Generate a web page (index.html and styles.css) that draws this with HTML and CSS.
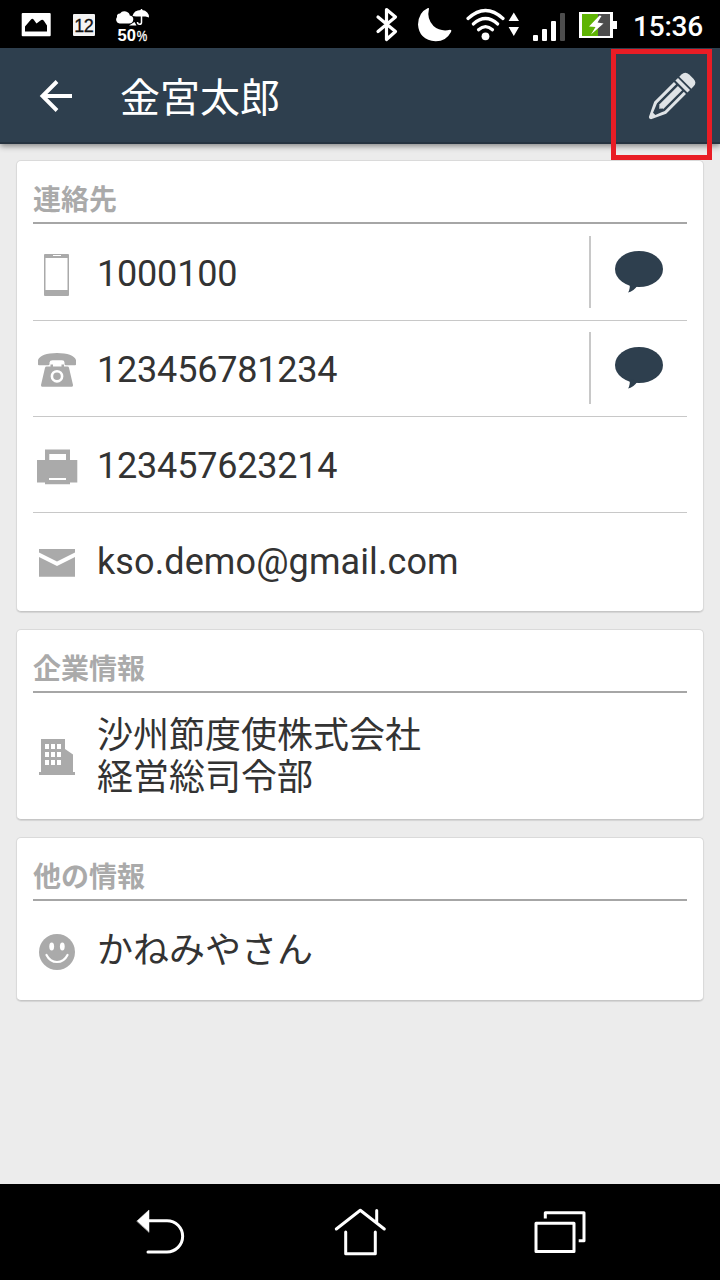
FILE: index.html
```html
<!DOCTYPE html>
<html lang="ja">
<head>
    <meta charset="UTF-8">
    <meta name="viewport" content="width=device-width, initial-scale=1.0">
    <title>金宮太郎</title>
    <link rel="stylesheet" href="styles.css">
</head>
<body>
    <div class="statusbar">
        <div class="status-left">
            <svg width="48" height="48" viewBox="0 0 48 48">
                <rect x="9.7" y="13" width="29" height="23.3" rx="1" fill="#fff"/>
                <path d="M13 31.5V26.5L19 19.5Q20.3 18 21.6 19.5L24.5 23.5L28.5 20.5Q30.5 19 32 21L35 25.5V31.5Z" fill="#000"/>
            </svg>
            <svg width="48" height="48" viewBox="0 0 48 48">
                <rect x="13" y="14" width="22" height="22" rx="1" fill="#f4f4f4"/>
                <text class="calendar-day" x="23.800" y="32" text-anchor="middle">12</text>
            </svg>
            <svg width="48" height="48" viewBox="0 0 48 48">
                <path d="M11.500 23.500A4 4 0 0 1 9 17Q8.500 14 12 13.600Q14 10.500 18 11.500Q21.500 12.500 21.800 15.500Q25.500 16 25.300 19.500Q25 23.500 21 23.500Z" fill="#fff"/>
                <path d="M24.500 16Q26 9.500 34 10Q41 11 41 17.500L37.500 16.600L33 16.600L28 16.600Z" fill="#fff"/>
                <path d="M33.500 9V22.500Q33.500 24.300 31.500 24.300Q29.500 24.300 29.500 22" fill="none" stroke="#fff" stroke-width="1.500"/>
                <path d="M21 25.500L26.500 22L28.500 25.500Z" fill="#fff"/>
                <text class="rain-value" x="9.500" y="41" textLength="18.500" lengthAdjust="spacingAndGlyphs">50</text>
                <text class="rain-unit" x="28.800" y="41" textLength="10.500" lengthAdjust="spacingAndGlyphs">%</text>
            </svg>
        </div>
        <div class="status-right">
            <svg width="34" height="48" viewBox="0 0 34 48">
                <path d="M8 17L25.500 31.500L16.500 39.500V9.500L25.500 17L8 31.500" fill="none" stroke="#fff" stroke-width="3.200" stroke-linejoin="round" stroke-linecap="round"/>
            </svg>
            <svg width="34" height="48" viewBox="0 0 34 48">
                <path d="M11 8.500Q8.500 19 15.500 26Q22.500 32 32 29.800Q34 29.800 33 32Q28 41.500 17.500 41.300Q1 40 0 24.500Q0.500 12.500 9.500 8.300Q11 7.500 11 8.500Z" fill="#fff"/>
            </svg>
            <svg width="53" height="48" viewBox="0 0 53 48">
                <g fill="none" stroke="#fff" stroke-width="3.200" stroke-linecap="round">
                    <path d="M2 18.500Q19.500 2.500 37 18.500"/>
                    <path d="M7.300 24Q19.500 13 31.700 24"/>
                    <path d="M12.500 29.800Q19.500 23.500 26.500 29.800"/>
                </g>
                <circle cx="19.500" cy="36.300" r="3.900" fill="#fff"/>
                <path d="M47.800 12.500L53 21H42.600ZM42.600 27H53L47.800 36Z" fill="#fff"/>
            </svg>
            <svg width="32" height="48" viewBox="0 0 32 48">
                <rect x="0" y="35" width="5" height="6" rx="1" fill="#fff"/>
                <rect x="9" y="29" width="5" height="12" rx="1" fill="#fff"/>
                <rect x="18" y="21" width="5" height="20" rx="1" fill="#fff"/>
                <rect x="27" y="13" width="5" height="28" rx="1" fill="#4d4d4d"/>
            </svg>
            <svg width="41" height="48" viewBox="0 0 41 48">
                <rect x="0" y="12" width="34" height="26" fill="#fff"/>
                <rect x="33" y="21" width="5" height="8" fill="#fff"/>
                <rect x="3" y="14" width="16" height="22" fill="#5fb404"/>
                <rect x="19" y="14" width="12" height="22" fill="#4d4d4d"/>
                <path d="M20.500 15.500L10 26.500L16.500 27L12 34.500L24.500 23.500L18.500 22.500L22.500 16Z" fill="#fff"/>
            </svg>
            <span class="clock">15:36</span>
        </div>
    </div>

    <header class="appbar">
        <svg class="back" width="48" height="48" viewBox="0 0 48 48">
            <path d="M40 24H10M25 9.500L10.500 24L25 38.500" fill="none" stroke="#fff" stroke-width="3.900"/>
        </svg>
        <h1 class="title">金宮太郎</h1>
        <svg class="edit" width="48" height="48" viewBox="0 0 48 48">
            <g transform="translate(43.300 4.700) rotate(45)" fill="#dfe3e6">
                <path d="M-8.500 8.500V5.500Q-8.500 0 -3 0H3Q8.500 0 8.500 5.500V8.500Z"/>
                <rect x="-8.500" y="10.300" width="17" height="3.700"/>
                <rect x="-3" y="16" width="6" height="28"/>
                <path d="M-8.500 16H-5.400V43L-4.500 45L-2 42L0 44.500L2 42L4.500 45L5.400 43V16H8.500V44L1.500 58.500Q0 60 -1.500 58.500L-8.500 44Z"/>
                <path d="M-4.800 44.500L-2.600 42.500L0 45.500L2.600 42.500L4.800 44.500L1.600 52.500H-1.600Z" fill="#2e3f4e"/>
            </g>
        </svg>
        <div class="highlight"></div>
    </header>

    <main class="content">
        <section class="card">
            <h2 class="card-head">連絡先</h2>
            <div class="card-list">
                <div class="row">
                    <svg class="icon" viewBox="0 -1 48 49">
                        <path fill-rule="evenodd" d="M12 5H35Q36 5 36 6V46Q36 47 35 47H12Q11 47 11 46V6Q11 5 12 5ZM12.500 9V41H34.500V9ZM20 6V7H28V6Z"/>
                    </svg>
                    <span class="text number">1000100</span>
                    <div class="message">
                        <svg width="50" height="44" viewBox="0 0 50 44">
                            <ellipse cx="25" cy="19" rx="24" ry="18"/>
                            <path d="M15.500 33Q16.500 39 14 42.500Q19 42 24 35Z"/>
                        </svg>
                    </div>
                </div>
                <div class="row">
                    <svg class="icon" viewBox="0 -1 48 49">
                        <path d="M5 19.500V15Q8 8 24 8T43 15V19.500Q43 20.300 42 20.300H33Q31.500 20.300 31.500 19V17.500Q31.500 15.300 29 15.300H19.500Q16.800 15.300 16.500 17.500V19Q16.500 20.300 15 20.300H6Q5 20.300 5 19.500Z"/>
                        <path d="M13.500 21.500H17.500V19.500H20V21.500H28.500V19.500H31V21.500H34.500Q35.700 21.500 36 22.800L40 40Q40.300 41.800 38.800 41.800H9.200Q7.800 41.800 8 40L12 22.800Q12.400 21.500 13.500 21.500Z"/>
                        <circle cx="24" cy="31.300" r="5.100" fill="none" stroke="#fff" stroke-width="2.600"/>
                    </svg>
                    <span class="text number">123456781234</span>
                    <div class="message">
                        <svg width="50" height="44" viewBox="0 0 50 44">
                            <ellipse cx="25" cy="19" rx="24" ry="18"/>
                            <path d="M15.500 33Q16.500 39 14 42.500Q19 42 24 35Z"/>
                        </svg>
                    </div>
                </div>
                <div class="row">
                    <svg class="icon" viewBox="0 -1 48 49">
                        <path fill-rule="evenodd" d="M12 8.500H37V19H44.300V41.500H37V43.300H12V41.500H4V19H12ZM16.300 13V19H33V13ZM16 37V39H33V37Z"/>
                    </svg>
                    <span class="text number">123457623214</span>
                </div>
                <div class="row">
                    <svg class="icon" viewBox="0 -1 48 49">
                        <path d="M6 12H42V15.500L24 24.500L6 15.500ZM6 20L24 29L42 20V39.700H6Z"/>
                    </svg>
                    <span class="text mail">kso.demo@gmail.com</span>
                </div>
            </div>
        </section>

        <section class="card">
            <h2 class="card-head">企業情報</h2>
            <div class="card-list">
                <div class="row row-tall">
                    <svg class="icon" viewBox="0 -1 48 49">
                        <path fill-rule="evenodd" d="M8 8H32V18L40 23.500V41H42V44H6V41H8ZM12 13v5h4v-5zM18 13v5h4v-5zM24 13v5h4v-5zM12 21v5h4v-5zM18 21v5h4v-5zM24 21v5h4v-5zM12 29v5h4v-5zM18 29v5h4v-5zM24 29v5h4v-5z"/>
                    </svg>
                    <span class="text">沙州節度使株式会社<br>経営総司令部</span>
                </div>
            </div>
        </section>

        <section class="card">
            <h2 class="card-head">他の情報</h2>
            <div class="card-list">
                <div class="row">
                    <svg class="icon" viewBox="0 -1 48 49">
                        <circle cx="24" cy="26" r="18"/>
                        <ellipse cx="18.700" cy="20.500" rx="2.400" ry="3.900" fill="#fff"/>
                        <ellipse cx="29.300" cy="20.500" rx="2.400" ry="3.900" fill="#fff"/>
                        <path d="M13.500 29Q17 36 24 36T34.500 29" fill="none" stroke="#fff" stroke-width="2.200" stroke-linecap="round"/>
                    </svg>
                    <span class="text">かねみやさん</span>
                </div>
            </div>
        </section>
    </main>

    <nav class="navbar">
        <svg width="60" height="60" viewBox="0 0 60 60">
            <path d="M7 19L19 8V30Z" fill="#fff" stroke-width="0.500"/>
            <path d="M18 18.700H37A15.650 15.650 0 0 1 37 50H18"/>
        </svg>
        <svg width="60" height="60" viewBox="0 0 60 60">
            <path d="M6.300 27L30.300 8.300L54.300 27M46.700 8.500V20.500M15.700 30V51.800H45.300V30"/>
        </svg>
        <svg width="60" height="60" viewBox="0 0 60 60">
            <path d="M6 21.300H44V49.500H6ZM15.300 16.500V10.700H54V38.700H48.700" stroke-linecap="butt"/>
        </svg>
    </nav>
</body>
</html>
```

FILE: styles.css
```css
* {
    margin: 0;
    padding: 0;
    box-sizing: border-box;
}

body {
    width: 720px;
    height: 1280px;
    display: flex;
    flex-direction: column;
    font-family: Roboto, "Noto Sans CJK JP", sans-serif;
    background: #ececec;
    color: #333;
    overflow: hidden;
}

svg {
    display: block;
    flex: none;
}

/* status bar */
.statusbar {
    height: 48px;
    padding: 0 16px 0 12px;
    display: flex;
    justify-content: space-between;
    background: #000;
    color: #fff;
}

.status-left {
    display: flex;
}

.status-right {
    display: flex;
    align-items: center;
    gap: 14px;
}

.calendar-day {
    font: 18px "Liberation Sans", sans-serif;
    fill: #111;
    stroke: #111;
    stroke-width: 0.3px;
    letter-spacing: -0.5px;
}

.rain-value {
    font: bold 17px "Liberation Sans", sans-serif;
    fill: #fff;
}

.rain-unit {
    font: 14px "Liberation Sans", sans-serif;
    fill: #fff;
    stroke: #fff;
    stroke-width: 0.3px;
}

.clock {
    width: 70px;
    padding-top: 6px;
    font-size: 28px;
    font-weight: 500;
    line-height: 32px;
    letter-spacing: -0.2px;
    text-indent: -1px;
    white-space: nowrap;
}

/* app bar */
.appbar {
    position: relative;
    z-index: 1;
    height: 96px;
    padding: 0 24px 0 32px;
    display: flex;
    align-items: center;
    background: #2e3f4e;
    border-bottom: 2px solid #263340;
    box-shadow: 0 2px 6px rgba(0, 0, 0, 0.45);
}

.title {
    flex: 1;
    margin-left: 40px;
    padding-top: 8px;
    font-size: 40px;
    font-weight: 400;
    line-height: 56px;
    color: #fff;
}

.back,
.edit {
    margin-top: 2px;
}

.highlight {
    position: absolute;
    top: 1px;
    right: 8px;
    width: 101px;
    height: 111px;
    border: 5px solid #e91d25;
}

/* cards */
.content {
    flex: 1;
    padding: 16px;
    display: flex;
    flex-direction: column;
    gap: 17px;
}

.card {
    background: #fff;
    border: 1px solid #dadada;
    border-bottom-color: #c6c6c6;
    border-radius: 5px;
    padding: 0 16px 2px;
    box-shadow: 0 1px 1px rgba(0, 0, 0, 0.1);
}

.card-head {
    height: 63px;
    padding-top: 20px;
    font-size: 28px;
    font-weight: 700;
    line-height: 40px;
    color: #aaa;
    border-bottom: 2px solid #a6a6a6;
}

.card-list {
    padding-top: 1px;
}

.row {
    height: 96px;
    display: flex;
    align-items: center;
    border-bottom: 1px solid #c8c8c8;
}

.row:last-child {
    border-bottom-color: transparent;
}

.row-tall {
    height: 123px;
    padding-bottom: 1px;
}

.icon {
    width: 48px;
    height: 49px;
    margin-right: 16px;
    fill: #aaa;
}

.text {
    flex: 1;
    padding-top: 2px;
    font-size: 36px;
    line-height: 42px;
}

.row-tall .text {
    padding-top: 5px;
}

.number {
    letter-spacing: -0.2px;
}

.mail {
    letter-spacing: 0.1px;
}

.message {
    width: 98px;
    height: 72px;
    margin-bottom: 2px;
    display: flex;
    align-items: center;
    justify-content: center;
    border-left: 2px solid #c8c8c8;
    fill: #2e3f4e;
}

/* navigation bar */
.navbar {
    height: 96px;
    padding: 0 60px;
    display: flex;
    align-items: center;
    justify-content: space-around;
    background: #000;
    fill: none;
    stroke: #fff;
    stroke-width: 3px;
    stroke-linecap: round;
    stroke-linejoin: round;
}
```
